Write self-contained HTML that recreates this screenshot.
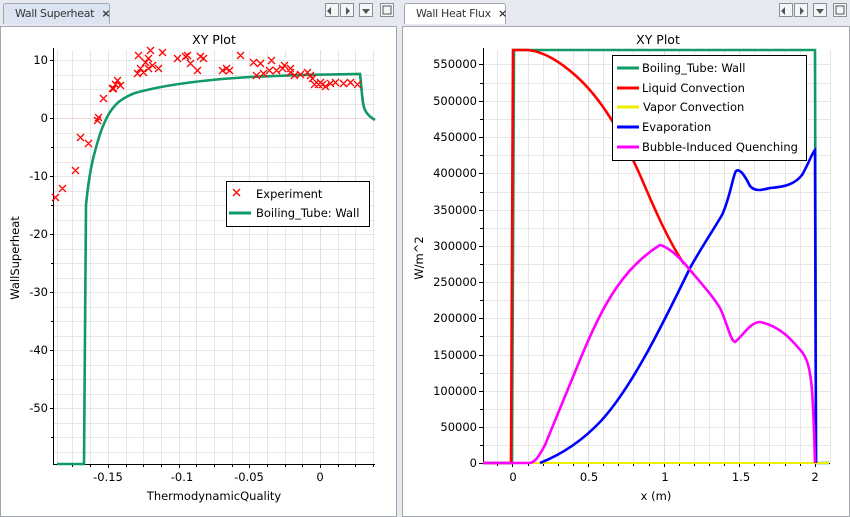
<!DOCTYPE html><html><head><style>
body{margin:0;width:850px;height:517px;background:#e6e9ef;font-family:"DejaVu Sans","Liberation Sans",sans-serif;overflow:hidden;position:relative}
.panel{position:absolute;background:#fff;border:1px solid #a3a7ad}
.tab{position:absolute;height:20px;border:1px solid #a3a7ad;border-bottom:none;border-radius:3px 3px 0 0;font-size:11px;line-height:20px;padding-left:11px;color:#333;white-space:nowrap;letter-spacing:-0.3px}
.btn{position:absolute;top:3px;width:14px;height:14px;border:1px solid #8a8e96;background:#f4f5f7;box-sizing:border-box}
</style></head><body>
<div class="panel" style="left:0;top:26px;width:395px;height:489px"></div>
<div class="panel" style="left:402px;top:26px;width:446px;height:489px"></div>
<div class="tab" style="left:3px;top:3px;width:94px;background:#dbe4f0">Wall Superheat <b style="margin-left:4px">×</b></div>
<div class="tab" style="left:404px;top:3px;width:89px;background:#fff">Wall Heat Flux <b style="margin-left:4px">×</b></div>
<div class="btn" style="left:325px"></div><div class="btn" style="left:340px"></div><div class="btn" style="left:359px"></div><div class="btn" style="left:380px"></div>
<div class="btn" style="left:779px"></div><div class="btn" style="left:794px"></div><div class="btn" style="left:813px"></div><div class="btn" style="left:833px"></div>
<svg width="850" height="517" style="position:absolute;left:0;top:0" font-family="DejaVu Sans,Liberation Sans,sans-serif">
<g fill="#555"><path d="M331 7l-4 4 4 4z M346 7l4 4-4 4z M362 9h8l-4 5z M785 7l-4 4 4 4z M800 7l4 4-4 4z M816 9h8l-4 5z"/></g>
<rect x="383" y="6" width="8" height="8" fill="none" stroke="#555"/><rect x="836" y="6" width="8" height="8" fill="none" stroke="#555"/>
<g stroke="#e6e6e6" stroke-width="1">
<path d="M57.5 50V464M72.5 50V464M90.5 50V464M108.5 50V464M126.5 50V464M143.5 50V464M161.5 50V464M179.5 50V464M196.5 50V464M214.5 50V464M232.5 50V464M249.5 50V464M267.5 50V464M285.5 50V464M302.5 50V464M320.5 50V464M338.5 50V464M355.5 50V464M373.5 50V464"/>
<path d="M54 60.5H375M54 75.5H375M54 89.5H375M54 104.5H375M54 118.5H375M54 133.5H375M54 147.5H375M54 162.5H375M54 176.5H375M54 191.5H375M54 205.5H375M54 220.5H375M54 234.5H375M54 249.5H375M54 263.5H375M54 278.5H375M54 292.5H375M54 307.5H375M54 321.5H375M54 336.5H375M54 350.5H375M54 365.5H375M54 379.5H375M54 394.5H375M54 408.5H375M54 423.5H375M54 437.5H375M54 452.5H375"/>
</g>
<path d="M320.5 50V464M54 118.5H375" stroke="#f0d8d8"/>
<path d="M53.5 48V464.5H375" fill="none" stroke="#000"/>
<g stroke="#000"><path d="M50 60.5h4M50 118.5h4M50 176.5h4M50 234.5h4M50 292.5h4M50 350.5h4M50 408.5h4M51 89.5h3M51 147.5h3M51 205.5h3M51 263.5h3M51 321.5h3M51 379.5h3M51 437.5h3M108.5 464v4M179.5 464v4M249.5 464v4M320.5 464v4M72.5 464v3M90.5 464v3M126.5 464v3M143.5 464v3M161.5 464v3M196.5 464v3M214.5 464v3M232.5 464v3M267.5 464v3M285.5 464v3M302.5 464v3M338.5 464v3M355.5 464v3M373.5 464v3"/></g>
<g font-size="11.5" text-anchor="end" fill="#000"><text x="48" y="64">10</text><text x="48" y="122">0</text><text x="48" y="180">-10</text><text x="48" y="238">-20</text><text x="48" y="296">-30</text><text x="48" y="354">-40</text><text x="48" y="412">-50</text></g>
<g font-size="11.5" text-anchor="middle"><text x="108" y="481">-0.15</text><text x="182" y="481">-0.1</text><text x="249" y="481">-0.05</text><text x="320" y="481">0</text><text x="214" y="500">ThermodynamicQuality</text><text x="214" y="44" font-size="12.5">XY Plot</text></g>
<text transform="translate(19 258) rotate(-90)" font-size="11.5" text-anchor="middle">WallSuperheat</text>
<path d="M57 464H84L86 205C88 185 90 170 94 155C98 140 102 125 110 112C116 103 122 98 135 93C160 86 200 80 250 77L300 75L360 74C362 90 362 104 365 110C368 116 372 118 375 120" fill="none" stroke="#119966" stroke-width="2.6"/>
<rect x="226.5" y="181.5" width="143" height="45" fill="#fff" stroke="#000"/>
<path d="M233 189l7 7M240 189l-7 7" stroke="#f00" stroke-width="1.3"/>
<path d="M229 213h22" stroke="#119966" stroke-width="3"/>
<g font-size="11.5"><text x="256" y="198">Experiment</text><text x="256" y="217">Boiling_Tube: Wall</text></g>

<g stroke="#e6e6e6">
<path d="M497.5 50V463M528.5 50V463M543.5 50V463M558.5 50V463M573.5 50V463M603.5 50V463M618.5 50V463M633.5 50V463M649.5 50V463M679.5 50V463M694.5 50V463M709.5 50V463M724.5 50V463M754.5 50V463M769.5 50V463M785.5 50V463M800.5 50V463M830.5 50V463"/>
<path d="M483 445.5H830M483 427.5H830M483 409.5H830M483 391.5H830M483 373.5H830M483 355.5H830M483 336.5H830M483 318.5H830M483 300.5H830M483 282.5H830M483 264.5H830M483 246.5H830M483 228.5H830M483 210.5H830M483 192.5H830M483 173.5H830M483 155.5H830M483 137.5H830M483 119.5H830M483 101.5H830M483 83.5H830M483 64.5H830"/>
</g>
<path d="M512.5 50V463M588.5 50V463M664.5 50V463M739.5 50V463M815.5 50V463" stroke="#dcdcdc"/>
<path d="M483.5 48V463.5H830" fill="none" stroke="#000"/>
<g stroke="#000"><path d="M479 463.5h4M479 427.5h4M479 391.5h4M479 355.5h4M479 318.5h4M479 282.5h4M479 246.5h4M479 210.5h4M479 173.5h4M479 137.5h4M479 101.5h4M479 64.5h4M480 445.5h3M480 409.5h3M480 373.5h3M480 336.5h3M480 300.5h3M480 264.5h3M480 228.5h3M480 192.5h3M480 155.5h3M480 119.5h3M480 83.5h3M512.5 463v4M588.5 463v4M664.5 463v4M739.5 463v4M815.5 463v4M497.5 463v3M528.5 463v3M543.5 463v3M558.5 463v3M573.5 463v3M603.5 463v3M618.5 463v3M633.5 463v3M649.5 463v3M679.5 463v3M694.5 463v3M709.5 463v3M724.5 463v3M754.5 463v3M769.5 463v3M785.5 463v3M800.5 463v3"/></g>
<g font-size="11.5" text-anchor="end"><text x="477" y="467">0</text><text x="477" y="431">50000</text><text x="477" y="395">100000</text><text x="477" y="359">150000</text><text x="477" y="322">200000</text><text x="477" y="286">250000</text><text x="477" y="250">300000</text><text x="477" y="214">350000</text><text x="477" y="177">400000</text><text x="477" y="141">450000</text><text x="477" y="105">500000</text><text x="477" y="68">550000</text></g>
<g font-size="11.5" text-anchor="middle"><text x="513" y="481">0</text><text x="589" y="481">0.5</text><text x="665" y="481">1</text><text x="741" y="481">1.5</text><text x="815" y="481">2</text><text x="656" y="500">x (m)</text><text x="658" y="44" font-size="12.5">XY Plot</text></g>
<text transform="translate(423 258) rotate(-90)" font-size="11.5" text-anchor="middle">W/m^2</text>
<path d="M483 463H512L514 50H815L816 463H829" fill="none" stroke="#119966" stroke-width="2.6"/>
<path d="M483 463H511L513 50H528C545 52 560 62 575 75C600 97 620 130 640 175C655 210 668 240 684 264" fill="none" stroke="#f00" stroke-width="2.6"/>
<path d="M483 463H829" stroke="#ee0" stroke-width="2"/>
<path d="M540 463C560 455 580 443 600 422C630 390 660 330 690 268C700 250 712 232 722 215C730 198 733 175 736 171C740 168 745 176 750 186C755 192 762 190 770 188C785 187 795 184 802 175C808 165 812 153 815 150L816 463" fill="none" stroke="#00f" stroke-width="2.6"/>
<path d="M483 463H530C535 462 538 458 545 445L575 372C600 310 620 270 660 245C668 247 678 256 685 264C700 282 712 295 720 308C728 325 730 340 735 342C742 337 750 322 760 322C780 326 792 340 802 352C812 365 813 390 815 463" fill="none" stroke="#f0f" stroke-width="2.6"/>
<rect x="612.5" y="55.5" width="194" height="105" fill="#fff" stroke="#000"/>
<path d="M617 68h22" stroke="#119966" stroke-width="3"/><path d="M617 88h22" stroke="#f00" stroke-width="3"/><path d="M617 107h22" stroke="#ee0" stroke-width="3"/><path d="M617 127h22" stroke="#00f" stroke-width="3"/><path d="M617 147h22" stroke="#f0f" stroke-width="3"/>
<g font-size="11.5"><text x="642" y="72">Boiling_Tube: Wall</text><text x="642" y="92">Liquid Convection</text><text x="643" y="111">Vapor Convection</text><text x="642" y="131">Evaporation</text><text x="642" y="151">Bubble-Induced Quenching</text></g>
<g stroke="#f00" stroke-width="1.3" fill="none">
<path d="M52 194l7 7M59 194l-7 7M59 185l7 7M66 185l-7 7M72 167l7 7M79 167l-7 7M77 134l7 7M84 134l-7 7M85 140l7 7M92 140l-7 7M94 117l7 7M101 117l-7 7M95 114l7 7M102 114l-7 7M100 95l7 7M107 95l-7 7M109 85l7 7M116 85l-7 7M112 81l7 7M119 81l-7 7M114 77l7 7M121 77l-7 7M110 85l7 7M117 85l-7 7M117 82l7 7M124 82l-7 7M135 52l7 7M142 52l-7 7M142 59l7 7M149 59l-7 7M147 47l7 7M154 47l-7 7M145 55l7 7M152 55l-7 7M149 62l7 7M156 62l-7 7M159 49l7 7M166 49l-7 7M140 69l7 7M147 69l-7 7M134 70l7 7M141 70l-7 7M137 65l7 7M144 65l-7 7M145 65l7 7M152 65l-7 7M155 65l7 7M162 65l-7 7M174 55l7 7M181 55l-7 7M182 53l7 7M189 53l-7 7M184 52l7 7M191 52l-7 7M187 60l7 7M194 60l-7 7M194 67l7 7M201 67l-7 7M200 55l7 7M207 55l-7 7M197 53l7 7M204 53l-7 7M219 67l7 7M226 67l-7 7M223 65l7 7M230 65l-7 7M226 67l7 7M233 67l-7 7M237 52l7 7M244 52l-7 7M250 59l7 7M257 59l-7 7M257 60l7 7M264 60l-7 7M253 72l7 7M260 72l-7 7M268 57l7 7M275 57l-7 7M260 70l7 7M267 70l-7 7M273 67l7 7M280 67l-7 7M279 65l7 7M286 65l-7 7M281 62l7 7M288 62l-7 7M287 65l7 7M294 65l-7 7M297 71l7 7M304 71l-7 7M304 69l7 7M311 69l-7 7M309 75l7 7M316 75l-7 7M311 81l7 7M318 81l-7 7M315 81l7 7M322 81l-7 7M319 81l7 7M326 81l-7 7M327 80l7 7M334 80l-7 7M332 79l7 7M339 79l-7 7M340 80l7 7M347 80l-7 7M347 79l7 7M354 79l-7 7M354 81l7 7M361 81l-7 7M322 83l7 7M329 83l-7 7M307 72l7 7M314 72l-7 7M291 72l7 7M298 72l-7 7M317 79l7 7M324 79l-7 7M287 69l7 7M294 69l-7 7M266 67l7 7M273 67l-7 7"/>
</g></svg>
</body></html>
